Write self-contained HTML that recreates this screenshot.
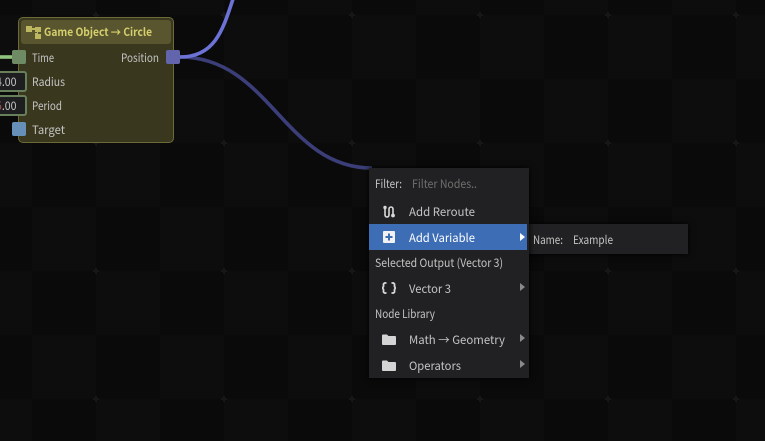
<!DOCTYPE html>
<html>
<head>
<meta charset="utf-8">
<style>
html,body{margin:0;padding:0}
body{width:765px;height:441px;overflow:hidden;position:relative;background:#0b0b0b;font-family:"Noto Sans CJK JP","Liberation Sans",sans-serif;font-size:12px;color:#c4c4c4}
#bg{position:absolute;left:0;top:0;width:765px;height:441px;background:conic-gradient(#0d0d0d 25%,#0a0a0a 0 50%,#0d0d0d 0 75%,#0a0a0a 0) 96px 79px/128px 128px}
.plus{position:absolute;width:6px;height:6px;background:linear-gradient(#171717,#171717) center/6px 2px no-repeat,linear-gradient(#171717,#171717) center/2px 6px no-repeat}
#node{position:absolute;left:18px;top:17px;width:154px;height:124px;background:#3a371f;border:1px solid #6d6a36;border-radius:5px}
#head{position:absolute;left:2px;top:2px;width:150px;height:24px;background:#59552f;border-radius:3px}
.pin{position:absolute;width:14px;height:14px;border-radius:2px}
.inp{position:absolute;left:-12px;width:35px;height:17px;background:#1e1e20;border:2px solid #687f5c;border-radius:3px}
#menu{position:absolute;left:369px;top:168px;width:160px;height:210px;background:#212123;box-shadow:0 0 6px #000}
#sub{position:absolute;left:527px;top:224px;width:161px;height:30px;background:#212123;box-shadow:0 0 6px #000}
#sel{position:absolute;left:369px;top:224px;width:158px;height:26px;background:#3d6db5}
.tri{position:absolute;left:520px;width:0;height:0;border-left:5px solid #8a8a8a;border-top:4.5px solid transparent;border-bottom:4.5px solid transparent}
svg{position:absolute}
text{font-size:11.5px;fill:#c4c4c4}
</style>
</head>
<body>
<div id="bg"></div>
<i class="plus" style="left:93px;top:12px"></i><i class="plus" style="left:221px;top:12px"></i><i class="plus" style="left:349px;top:12px"></i><i class="plus" style="left:477px;top:12px"></i><i class="plus" style="left:605px;top:12px"></i><i class="plus" style="left:733px;top:12px"></i>
<i class="plus" style="left:93px;top:140px"></i><i class="plus" style="left:221px;top:140px"></i><i class="plus" style="left:349px;top:140px"></i><i class="plus" style="left:477px;top:140px"></i><i class="plus" style="left:605px;top:140px"></i><i class="plus" style="left:733px;top:140px"></i>
<i class="plus" style="left:93px;top:268px"></i><i class="plus" style="left:221px;top:268px"></i><i class="plus" style="left:349px;top:268px"></i><i class="plus" style="left:605px;top:268px"></i><i class="plus" style="left:733px;top:268px"></i>
<i class="plus" style="left:93px;top:396px"></i><i class="plus" style="left:221px;top:396px"></i><i class="plus" style="left:349px;top:396px"></i><i class="plus" style="left:477px;top:396px"></i><i class="plus" style="left:605px;top:396px"></i><i class="plus" style="left:733px;top:396px"></i>

<svg width="765" height="441" style="left:0;top:0">
<path d="M180 57C270 57 284 168 372 168" fill="none" stroke="#3b3e78" stroke-width="3.600"/>
<path d="M180 57C218 57 224 25 236 -10" fill="none" stroke="#6d73d6" stroke-width="3.600"/>
<path d="M0 57H14" stroke="#90c47e" stroke-width="3.600"/>
</svg>

<div id="node"><div id="head"></div></div>
<svg width="16" height="14" viewBox="0 0 16 14" style="left:26px;top:26px"><path d="M0 0H6V2H9V1H15V6H12V8H15V13H9V7H11V6H9V4H6V6H0Z" fill="#bdb75f"/></svg>

<div class="pin" style="left:12px;top:50px;background:#6f8b65"></div>
<div class="pin" style="left:166px;top:50px;background:#6265ab"></div>
<div class="inp" style="top:71px"></div>
<div class="inp" style="top:95px"></div>
<div class="pin" style="left:12px;top:122px;background:#6790b8"></div>

<div id="sub"></div>
<div id="menu"></div>
<div id="sel"></div>

<svg width="14" height="14" viewBox="0 0 14 14" style="left:382px;top:205px"><path d="M3 3V10A2 2 0 0 0 7 10V4A2 2 0 0 1 11 4V9" fill="none" stroke="#d8d8d8" stroke-width="1.600"/><circle cx="3" cy="2.500" r="1.700" fill="#d8d8d8"/><circle cx="11" cy="10.500" r="1.900" fill="#d8d8d8"/></svg>
<svg width="12" height="12" viewBox="0 0 12 12" style="left:383px;top:231px"><rect width="12" height="12" rx="1" fill="#f2f2f2"/><path d="M6 2.500V9.500M2.500 6H9.500" stroke="#3d6db5" stroke-width="2"/></svg>
<div class="tri" style="top:233px;border-left-color:#fff"></div>
<svg width="14" height="12" viewBox="0 0 14 12" style="left:382px;top:282px"><path d="M4.500 1H2.500L1.500 2V4.500L.5 6 1.500 7.500V10L2.500 11H4.500M9.500 1H11.500L12.500 2V4.500L13.500 6 12.500 7.500V10L11.500 11H9.500" fill="none" stroke="#d8d8d8" stroke-width="1.800"/></svg>
<div class="tri" style="top:283px"></div>
<svg width="14" height="11" viewBox="0 0 14 11" style="left:382px;top:334px"><path d="M0 1.500Q0 .5 1 .5H5L6.500 2H13Q14 2 14 3V10Q14 11 13 11H1Q0 11 0 10Z" fill="#d4d4d4"/></svg>
<div class="tri" style="top:334px"></div>
<svg width="14" height="11" viewBox="0 0 14 11" style="left:382px;top:360px"><path d="M0 1.500Q0 .5 1 .5H5L6.500 2H13Q14 2 14 3V10Q14 11 13 11H1Q0 11 0 10Z" fill="#d4d4d4"/></svg>
<div class="tri" style="top:360px"></div>

<svg width="765" height="441" style="left:0;top:0">
<text x="44" y="36" textLength="108" lengthAdjust="spacingAndGlyphs" style="font-weight:bold;font-size:11px;fill:#d5cf6d">Game Object → Circle</text>
<text x="32" y="62" textLength="22" lengthAdjust="spacingAndGlyphs">Time</text>
<text x="121" y="62" textLength="38" lengthAdjust="spacingAndGlyphs">Position</text>
<text x="32" y="86" textLength="33" lengthAdjust="spacingAndGlyphs">Radius</text>
<text x="32" y="110" textLength="30" lengthAdjust="spacingAndGlyphs">Period</text>
<text x="32" y="134" textLength="33" lengthAdjust="spacingAndGlyphs">Target</text>
<text x="-4" y="86" textLength="20.500" lengthAdjust="spacingAndGlyphs">4.00</text>
<text x="-4" y="110" textLength="20.500" lengthAdjust="spacingAndGlyphs"><tspan style="fill:#a55">5</tspan>.00</text>
<text x="375" y="188" textLength="27" lengthAdjust="spacingAndGlyphs">Filter:</text>
<text x="412" y="188" textLength="65" lengthAdjust="spacingAndGlyphs" style="fill:#6f6f6f">Filter Nodes..</text>
<text x="409" y="216" textLength="66" lengthAdjust="spacingAndGlyphs">Add Reroute</text>
<text x="409" y="242" textLength="66" lengthAdjust="spacingAndGlyphs" style="fill:#fff">Add Variable</text>
<text x="375" y="267" textLength="128" lengthAdjust="spacingAndGlyphs">Selected Output (Vector 3)</text>
<text x="409" y="293" textLength="42" lengthAdjust="spacingAndGlyphs">Vector 3</text>
<text x="375" y="318" textLength="60" lengthAdjust="spacingAndGlyphs">Node Library</text>
<text x="409" y="344" textLength="96" lengthAdjust="spacingAndGlyphs">Math → Geometry</text>
<text x="409" y="370" textLength="52" lengthAdjust="spacingAndGlyphs">Operators</text>
<text x="533" y="244" textLength="30" lengthAdjust="spacingAndGlyphs">Name:</text>
<text x="573" y="244" textLength="40" lengthAdjust="spacingAndGlyphs">Example</text>
</svg>
</body>
</html>
